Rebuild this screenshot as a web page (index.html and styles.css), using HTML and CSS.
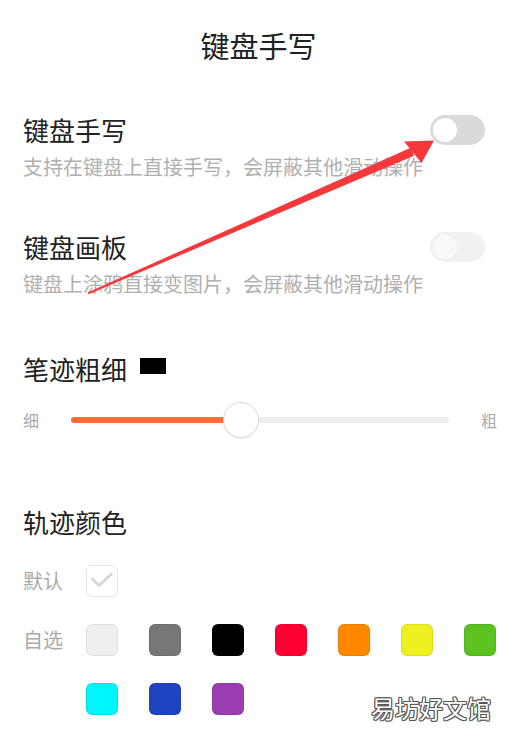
FILE: index.html
```html
<!DOCTYPE html>
<html lang="zh-CN">
<head>
<meta charset="utf-8">
<title>键盘手写</title>
<link rel="stylesheet" href="styles.css">
</head>
<body>
<div class="screen">
  <header class="topbar"><h1 class="topbar-title">键盘手写</h1></header>
  <main class="page">
    <section class="setting setting-first">
      <div class="setting-head">
        <span class="setting-title">键盘手写</span>
        <span class="toggle"><span class="toggle-knob"></span></span>
      </div>
      <p class="setting-desc">支持在键盘上直接手写，会屏蔽其他滑动操作</p>
    </section>
    <section class="setting setting-second">
      <div class="setting-head">
        <span class="setting-title">键盘画板</span>
        <span class="toggle toggle-disabled"><span class="toggle-knob"></span></span>
      </div>
      <p class="setting-desc">键盘上涂鸦直接变图片，会屏蔽其他滑动操作</p>
    </section>
    <section class="setting setting-stroke">
      <div class="stroke-head">
        <span class="setting-title">笔迹粗细</span>
        <span class="stroke-preview"></span>
      </div>
      <div class="slider-row">
        <span class="slider-label">细</span>
        <div class="slider">
          <div class="slider-fill"></div>
          <div class="slider-knob"></div>
        </div>
        <span class="slider-label">粗</span>
      </div>
    </section>
    <section class="setting setting-color">
      <div class="setting-title">轨迹颜色</div>
      <div class="color-row color-row-default">
        <span class="color-label">默认</span>
        <span class="swatch swatch-check">
          <svg width="32" height="32" viewBox="0 0 32 32"><path d="M6.5 14 L13 20.5 L25.5 9" fill="none" stroke="#d4d4d4" stroke-width="2.6" stroke-linecap="round" stroke-linejoin="round"/></svg>
        </span>
      </div>
      <div class="color-row color-row-custom">
        <span class="color-label">自选</span>
        <div class="swatch-grid">
          <span class="swatch swatch-light"></span>
          <span class="swatch c-grey"></span>
          <span class="swatch c-black"></span>
          <span class="swatch c-red"></span>
          <span class="swatch c-orange"></span>
          <span class="swatch c-yellow"></span>
          <span class="swatch c-green"></span>
          <span class="swatch c-cyan"></span>
          <span class="swatch c-blue"></span>
          <span class="swatch c-purple"></span>
        </div>
      </div>
    </section>
  </main>
  <svg class="arrow" width="517" height="741" viewBox="0 0 517 741">
    <polygon points="87.6,292.6 411.2,147.6 414.0,155.8 88.6,294.2" fill="#f5383c"/>
    <polygon points="434,140.5 404,141.5 421.5,163" fill="#f5383c"/>
  </svg>
  <div class="watermark">易坊好文馆</div>
</div>
</body>
</html>
```
FILE: styles.css
```css
* { box-sizing: border-box; }
html, body { margin: 0; padding: 0; background: #fff; }
body {
  font-family: "Noto Sans CJK SC", "Noto Sans", sans-serif;
  color: #222;
}
.screen {
  position: relative;
  width: 517px;
  height: 741px;
  overflow: hidden;
  background: #fff;
}
.topbar {
  height: 90px;
  display: flex;
  align-items: center;
  justify-content: center;
}
.topbar-title {
  margin: 0;
  font-size: 29px;
  line-height: 29px;
  font-weight: 400;
  color: #222;
}
.page {
  padding: 0 20px 0 23px;
}
.setting-title {
  font-size: 26px;
  line-height: 26px;
  color: #222;
}
.setting-head {
  display: flex;
  align-items: center;
  justify-content: space-between;
  height: 30px;
  padding-right: 12px;
}
.setting-first { margin-top: 25px; }
.setting-second { margin-top: 55px; }
.setting-desc {
  margin: 12px 0 0;
  font-size: 20px;
  line-height: 20px;
  color: #b0b0b0;
}
.toggle {
  position: relative;
  width: 55px;
  height: 30px;
  border-radius: 15px;
  background: #dadada;
  display: flex;
  align-items: center;
  padding-left: 3px;
}
.toggle-knob {
  width: 24px;
  height: 24px;
  border-radius: 50%;
  background: #fff;
}
.toggle-disabled { background: #f1f1f1; }
.toggle-disabled .toggle-knob { background: #f9f9f9; }

.setting-stroke { margin-top: 62px; }
.stroke-head {
  display: flex;
  align-items: center;
  height: 26px;
  gap: 13px;
}
.stroke-preview {
  width: 26px;
  height: 16px;
  background: #000;
  margin-top: -6px;
}
.slider-row {
  margin-top: 20px;
  height: 36px;
  display: flex;
  align-items: center;
}
.slider-label {
  font-size: 16px;
  line-height: 16px;
  color: #aaa;
}
.slider {
  position: relative;
  width: 379px;
  height: 6px;
  margin: 0 32px;
  border-radius: 3px;
  background: #eceef0;
}
.slider-fill {
  width: 170px;
  height: 6px;
  border-radius: 3px;
  background: #ff6b35;
}
.slider-knob {
  position: absolute;
  left: 152px;
  top: -15px;
  width: 36px;
  height: 36px;
  border-radius: 50%;
  background: #fff;
  border: 1px solid #dcdcdc;
  box-shadow: 0 1px 2px rgba(0,0,0,0.08);
}

.setting-color { margin-top: 71px; }
.color-row {
  display: flex;
  align-items: flex-start;
}
.color-row-default { margin-top: 30px; align-items: center; }
.color-row-custom { margin-top: 27px; }
.color-label {
  width: 63px;
  font-size: 20px;
  line-height: 32px;
  color: #aaa;
  flex: none;
}
.swatch-grid {
  display: grid;
  grid-template-columns: repeat(7, 32px);
  column-gap: 31px;
  row-gap: 27px;
}
.swatch {
  display: block;
  width: 32px;
  height: 32px;
  border-radius: 6px;
  border: 1px solid rgba(0,0,0,0.07);
}
.swatch-check {
  background: #fff;
  border: 1.5px solid #e6e6e6;
}
.swatch-check svg { display: block; margin: -1.5px; }
.swatch-light { background: #efefef; border: 1.5px solid #e0e0e0; }
.c-grey { background: #777777; }
.c-black { background: #000; }
.c-red { background: #ff0033; }
.c-orange { background: #ff8800; }
.c-yellow { background: #eef01f; }
.c-green { background: #5cc21f; }
.c-cyan { background: #00f4fb; }
.c-blue { background: #1f44c3; }
.c-purple { background: #9b3db0; }

.arrow {
  position: absolute;
  left: 0;
  top: 0;
  pointer-events: none;
}
.watermark {
  position: absolute;
  right: 26px;
  top: 694px;
  font-size: 24px;
  line-height: 28px;
  color: #fff;
  text-shadow: 1px 0 #555, -1px 0 #555, 0 1px #555, 0 -1px #555,
               1px 1px #666, -1px -1px #666, 1px -1px #666, -1px 1px #666;
}
```
